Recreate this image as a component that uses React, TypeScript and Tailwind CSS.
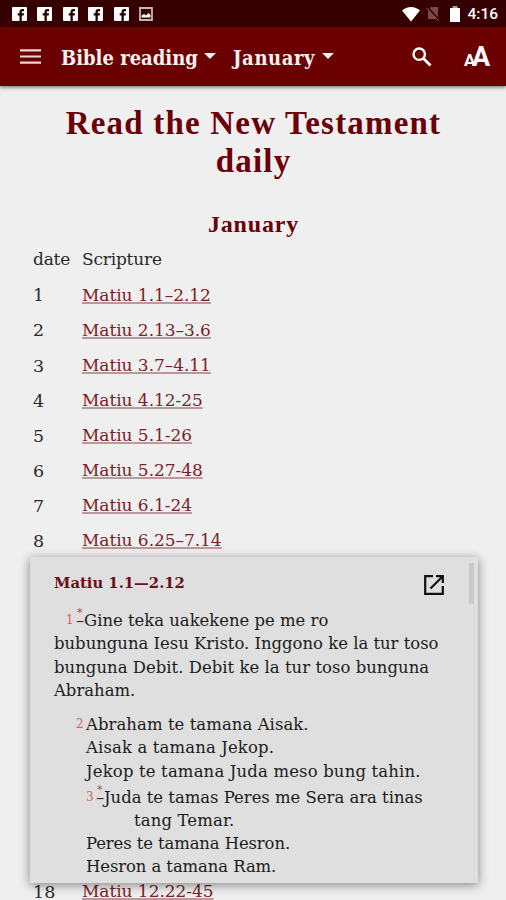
import React from 'react'

const readings = [
  { day: 1, passage: 'Matiu 1.1–2.12' },
  { day: 2, passage: 'Matiu 2.13–3.6' },
  { day: 3, passage: 'Matiu 3.7–4.11' },
  { day: 4, passage: 'Matiu 4.12-25' },
  { day: 5, passage: 'Matiu 5.1-26' },
  { day: 6, passage: 'Matiu 5.27-48' },
  { day: 7, passage: 'Matiu 6.1-24' },
  { day: 8, passage: 'Matiu 6.25–7.14' },
]

const FacebookIcon = () => (
  <svg viewBox="0 0 15 14" className="w-[15px] h-[14px]">
    <rect width="15" height="14" rx="1" fill="#fff" />
    <path d="M7.500 14V8.600H5.700V6.300h1.800V5c0-1.900 1-3 2.900-3H12v2.200h-1.200c-.8 0-1 .3-1 1v1.100H12l-.3 2.300H9.800V14z" fill="#200" />
  </svg>
)

const StatusBar = () => (
  <div className="h-[27px] bg-[#370000] flex items-center justify-between pl-3 pr-[8px]">
    <div className="flex items-center gap-[10.400px] pt-[1px]">
      <FacebookIcon />
      <FacebookIcon />
      <FacebookIcon />
      <FacebookIcon />
      <FacebookIcon />
      <svg viewBox="0 0 14 14" className="w-[14px] h-[14px]">
        <path d="M1 1h12v12H1z" fill="none" stroke="#c9b5b5" strokeWidth="1.800" />
        <path d="M2.500 10.500V8.500L5 7l2 1.500L9.500 6l2 2v2.500z" fill="#fff" />
      </svg>
    </div>
    <div className="flex items-center">
      <svg viewBox="0 0 20 16" className="w-[20px] h-[16px]">
        <path d="M1 4.500C6-.2 14-.2 19 4.500L10 15.500z" fill="#fff" />
      </svg>
      <svg viewBox="0 0 14 15" className="w-[14px] h-[15px] ml-[5px]">
        <path d="M5 1h7v12H2V4z" fill="#7a4a4a" />
        <path d="M1 1l12 13" stroke="#370000" strokeWidth="2.200" />
        <path d="M.5 2l12 12.500" stroke="#8e6262" strokeWidth="1" />
      </svg>
      <svg viewBox="0 0 12 16" className="w-[12px] h-[16px] ml-[9px]">
        <path d="M3.500 0h5v2h-5z" fill="#b99" />
        <path d="M1 2h10v14H1z" fill="#fff" />
      </svg>
      <span className="ml-[6px] pt-[2px] font-[Roboto,sans-serif] font-medium text-[15.500px] leading-none text-white">4:16</span>
    </div>
  </div>
)

const Caret = () => (
  <svg viewBox="0 0 12 6" className="w-[12px] h-[6px]">
    <path d="M0 0h12L6 6z" fill="#f6ecec" />
  </svg>
)

const Toolbar = () => (
  <div className="h-[59px] bg-[#6b0000] flex items-center text-[#f8f0f0] shadow-[0_1px_4px_rgba(0,0,0,0.6)]">
    <svg viewBox="0 0 21 15" className="w-[21px] h-[15px] ml-[20px]">
      <path d="M0 1.300h21M0 7.500h21M0 13.700h21" stroke="#e9d6d6" strokeWidth="2.200" />
    </svg>
    <span className="w-[136px] ml-[20px] mt-[2px] font-bold text-[20px] whitespace-nowrap">Bible reading</span>
    <span className="ml-[7px] -mt-[2px]"><Caret /></span>
    <span className="w-[83px] ml-[17px] mt-[2px] font-bold text-[20px] tracking-[0.600px] whitespace-nowrap">January</span>
    <span className="ml-[6px] -mt-[2px]"><Caret /></span>
    <svg viewBox="0 0 20 20" className="w-[20px] h-[20px] ml-[78px]">
      <circle cx="7.200" cy="7.200" r="5.700" fill="none" stroke="#fff" strokeWidth="2.400" />
      <path d="M11.500 11.500l7 7" stroke="#fff" strokeWidth="2.900" />
    </svg>
    <div className="ml-[32px] mt-[2px] flex items-baseline font-[Roboto,sans-serif] font-bold leading-none text-white">
      <span className="w-[8px] text-[17px]">A</span>
      <span className="text-[27px]">A</span>
    </div>
  </div>
)

const Row = ({ day, passage }: { day: number; passage: string }) => (
  <div className="flex h-[35.100px] items-center">
    <span className="w-[49px] text-[17.500px]">{day}</span>
    <span className="tracking-[-0.050px] text-[#7b2229] underline decoration-2 underline-offset-[1px] decoration-[#b9999b]">{passage}</span>
  </div>
)

const Footnote = () => (
  <span className="relative inline-block w-[8px] text-[#5a2024]">
    –
    <span className="absolute left-[1px] -top-[8px] text-[11px] text-[#a04a50]">*</span>
  </span>
)

const Verse = ({ n }: { n: number }) => (
  <span className="inline-block w-[10px] text-[12px] leading-none align-[2px] text-[#e05a5a]">{n}</span>
)

const Popup = () => (
  <div className="absolute left-[30px] top-[557px] w-[448px] h-[326px] bg-[#dfdfdf] shadow-[0_2px_10px_rgba(0,0,0,0.45)] pl-6 text-[16.450px] text-[#1c1c1c] whitespace-nowrap">
    <div className="flex h-[47px] justify-between pt-[6px] pr-[4px]">
      <h3 className="mt-[9px] font-bold text-[14.800px] text-[#6b1018]">Matiu 1.1—2.12</h3>
      <div className="flex">
        <svg viewBox="0 0 20 20" className="w-[20px] h-[20px] mt-[12px] mr-[25px]">
          <path d="M9 1.200H1.200v17.600h17.600V11M12 1.200h6.800V8M18.500 1.500L6.500 13.500" fill="none" stroke="#111" strokeWidth="2.200" />
        </svg>
        <div className="w-[5px] h-[41px] bg-[#c9c9c9]" />
      </div>
    </div>
    <div className="mt-[5px] grid auto-rows-[23.300px] leading-[23.300px]">
      <p className="pl-[12px]"><Verse n={1} /><Footnote />Gine teka uakekene pe me ro</p>
      <p>bubunguna Iesu Kristo. Inggono ke la tur toso</p>
      <p className="tracking-[0.040px]">bunguna Debit. Debit ke la tur toso bunguna</p>
      <p>Abraham.</p>
    </div>
    <div className="mt-[11px] pl-8 grid grid-rows-[23.300px_23.300px_25.800px_23.300px_23.300px_23.300px_23.300px] leading-[23.300px]">
      <p className="-ml-[10px] tracking-[0.080px]"><Verse n={2} />Abraham te tamana Aisak.</p>
      <p className="tracking-[0.150px]">Aisak a tamana Jekop.</p>
      <p className="tracking-[0.180px]">Jekop te tamana Juda meso bung tahin.</p>
      <p><Verse n={3} /><Footnote />Juda te tamas Peres me Sera ara tinas</p>
      <p className="pl-12 tracking-[0.150px]">tang Temar.</p>
      <p className="tracking-[-0.100px]">Peres te tamana Hesron.</p>
      <p className="tracking-[-0.080px]">Hesron a tamana Ram.</p>
    </div>
  </div>
)

const App = () => {
  return (
    <div className="relative w-[506px] h-[900px] overflow-hidden bg-[#efefef] font-['DejaVu_Serif',serif]">
      <div className="font-['DejaVu_Serif_Condensed','DejaVu_Serif',serif]">
        <StatusBar />
        <Toolbar />
      </div>
      <div className="text-center font-bold text-[#6b0008] font-['Liberation_Serif',serif]">
        <h1 className="mt-[18px] pl-[1px] text-[33px] leading-[38px] tracking-[1.200px]">
          Read the New Testament<br />daily
        </h1>
        <h2 className="mt-[29px] pl-[1px] text-[24px] leading-[30px] tracking-[0.800px]">January</h2>
      </div>
      <div className="mt-[3px] pl-[33px] text-[17px] text-[#2a2a2a]">
        <div className="flex h-[35.900px] pb-[0.800px] items-center">
          <span className="w-[49px] tracking-[-0.200px]">date</span>
          <span className="tracking-[-0.200px]">Scripture</span>
        </div>
        {readings.map((r) => <Row key={r.day} {...r} />)}
        <div className="mt-[316px]">
          <Row day={18} passage="Matiu 12.22-45" />
        </div>
      </div>
      <Popup />
    </div>
  )
}

export default App
